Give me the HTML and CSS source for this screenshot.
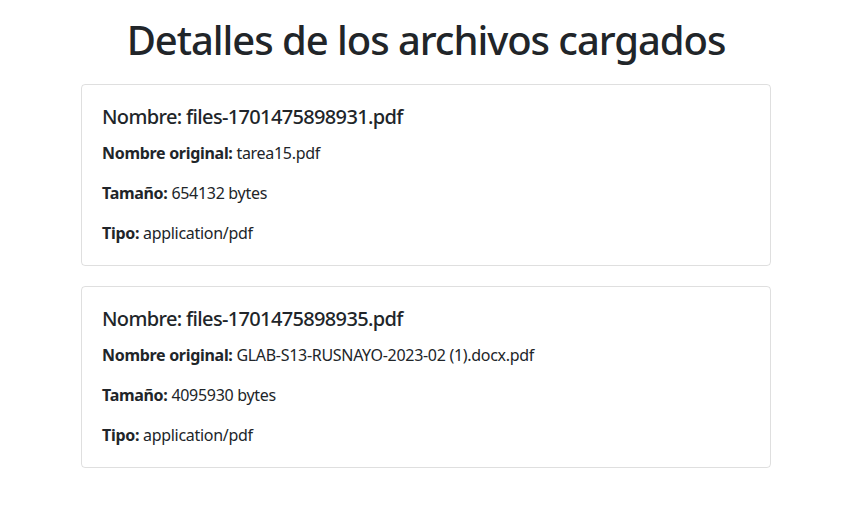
FILE: index.html
```html
<!DOCTYPE html>
<html lang="es">
<head>
<meta charset="utf-8">
<title>Detalles de los archivos cargados</title>
<link rel="stylesheet" href="styles.css">
</head>
<body>
<div class="container">
  <h1 class="title">Detalles de los archivos cargados</h1>
  <div class="card">
    <h5 class="card-title">Nombre: files-1701475898931.pdf</h5>
    <p class="card-text"><strong>Nombre original:</strong> tarea15.pdf</p>
    <p class="card-text"><strong>Tamaño:</strong> 654132 bytes</p>
    <p class="card-text"><strong>Tipo:</strong> application/pdf</p>
  </div>
  <div class="card">
    <h5 class="card-title">Nombre: files-1701475898935.pdf</h5>
    <p class="card-text"><strong>Nombre original:</strong> GLAB-S13-RUSNAYO-2023-02 (1).docx.pdf</p>
    <p class="card-text"><strong>Tamaño:</strong> 4095930 bytes</p>
    <p class="card-text"><strong>Tipo:</strong> application/pdf</p>
  </div>
</div>
</body>
</html>
```
FILE: styles.css
```css
html, body {
  margin: 0;
  padding: 0;
  background: #fff;
}
body {
  font-family: "Noto Sans", "Open Sans", sans-serif;
  font-size: 16px;
  line-height: 1.5;
  color: #212529;
  letter-spacing: -0.3px;
}
.container {
  width: 690px;
  margin: 0 auto;
  padding: 16px 0 0 0;
  transform: translateX(-6px);
}
.title {
  margin: 0 0 20px 0;
  font-size: 40px;
  line-height: 48px;
  font-weight: 500;
  text-align: center;
  letter-spacing: -1.05px;
}
.card {
  border: 1px solid rgba(0,0,0,.125);
  border-radius: 4px;
  padding: 20px;
  margin-bottom: 20px;
}
.card-title {
  margin: 0 0 12px 0;
  font-size: 20px;
  line-height: 24px;
  font-weight: 500;
  letter-spacing: -0.65px;
}
.card-text {
  margin: 0 0 16px 0;
}
.card-text:last-child {
  margin-bottom: 0;
}
strong {
  font-weight: 700;
}
```
